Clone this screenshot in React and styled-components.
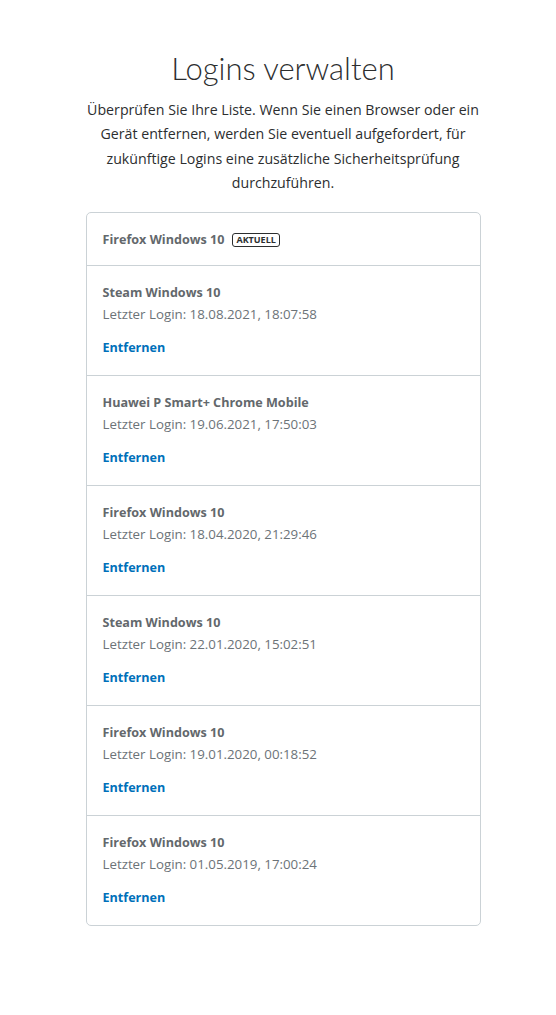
import React from 'react';
import styled, { createGlobalStyle } from 'styled-components';

const GlobalStyle = createGlobalStyle`
  html, body {
    margin: 0;
    padding: 0;
    background: #ffffff;
  }
  body {
    font-family: "Open Sans", "Noto Sans", "Liberation Sans", sans-serif;
    color: #2c2e2f;
  }
`;

const Page = styled.div`
  display: flex;
  flex-direction: column;
  align-items: center;
  padding: 48px 0 88px 10px;
`;

const Title = styled.h1`
  margin: 0;
  font-family: Lato, "Open Sans", sans-serif;
  font-weight: 300;
  font-size: 31px;
  line-height: 40px;
  color: #2c2e2f;
`;

const Intro = styled.p`
  margin: 10px 0 17px;
  width: 402px;
  text-align: center;
  font-size: 14.2px;
  line-height: 24.3px;
  color: #2c2e2f;
`;

const Card = styled.div`
  width: 393px;
  border: 1px solid #cbd2d6;
  border-radius: 5px;
  overflow: hidden;
`;

const Row = styled.div`
  display: flex;
  flex-direction: column;
  padding: ${p => (p.$current ? '19px 16px 16px' : '19px 16px 18px')};
  height: ${p => (p.$current ? '52px' : '110px')};
  box-sizing: border-box;
  border-top: ${p => (p.$first ? 'none' : '1px solid #cbd2d6')};
`;

const NameLine = styled.div`
  display: flex;
  align-items: center;
  gap: 8px;
`;

const Name = styled.span`
  font-size: 12.6px;
  line-height: 16px;
  font-weight: 700;
  color: #63686c;
`;

const Badge = styled.span`
  font-size: 9px;
  line-height: 10px;
  font-weight: 700;
  color: #2c2e2f;
  border: 1px solid #2c2e2f;
  border-radius: 3px;
  padding: 1px 3px;
`;

const LastLogin = styled.div`
  margin-top: 5px;
  font-size: 13.3px;
  line-height: 17px;
  color: #6c7378;
`;

const Remove = styled.a`
  margin-top: 17px;
  font-size: 12.6px;
  line-height: 16px;
  font-weight: 700;
  color: #0070ba;
  text-decoration: none;
  cursor: pointer;
`;

const sessions = [
  { name: 'Steam Windows 10', date: '18.08.2021, 18:07:58' },
  { name: 'Huawei P Smart+ Chrome Mobile', date: '19.06.2021, 17:50:03' },
  { name: 'Firefox Windows 10', date: '18.04.2020, 21:29:46' },
  { name: 'Steam Windows 10', date: '22.01.2020, 15:02:51' },
  { name: 'Firefox Windows 10', date: '19.01.2020, 00:18:52' },
  { name: 'Firefox Windows 10', date: '01.05.2019, 17:00:24' },
];

export default function App() {
  return (
    <>
      <GlobalStyle />
      <Page>
        <Title>Logins verwalten</Title>
        <Intro>
          Überprüfen Sie Ihre Liste. Wenn Sie einen Browser oder ein Gerät entfernen, werden Sie
          eventuell aufgefordert, für zukünftige Logins eine zusätzliche Sicherheitsprüfung
          durchzuführen.
        </Intro>
        <Card>
          <Row $first $current>
            <NameLine>
              <Name>Firefox Windows 10</Name>
              <Badge>AKTUELL</Badge>
            </NameLine>
          </Row>
          {sessions.map((s, i) => (
            <Row key={i}>
              <Name>{s.name}</Name>
              <LastLogin>Letzter Login: {s.date}</LastLogin>
              <Remove>Entfernen</Remove>
            </Row>
          ))}
        </Card>
      </Page>
    </>
  );
}
